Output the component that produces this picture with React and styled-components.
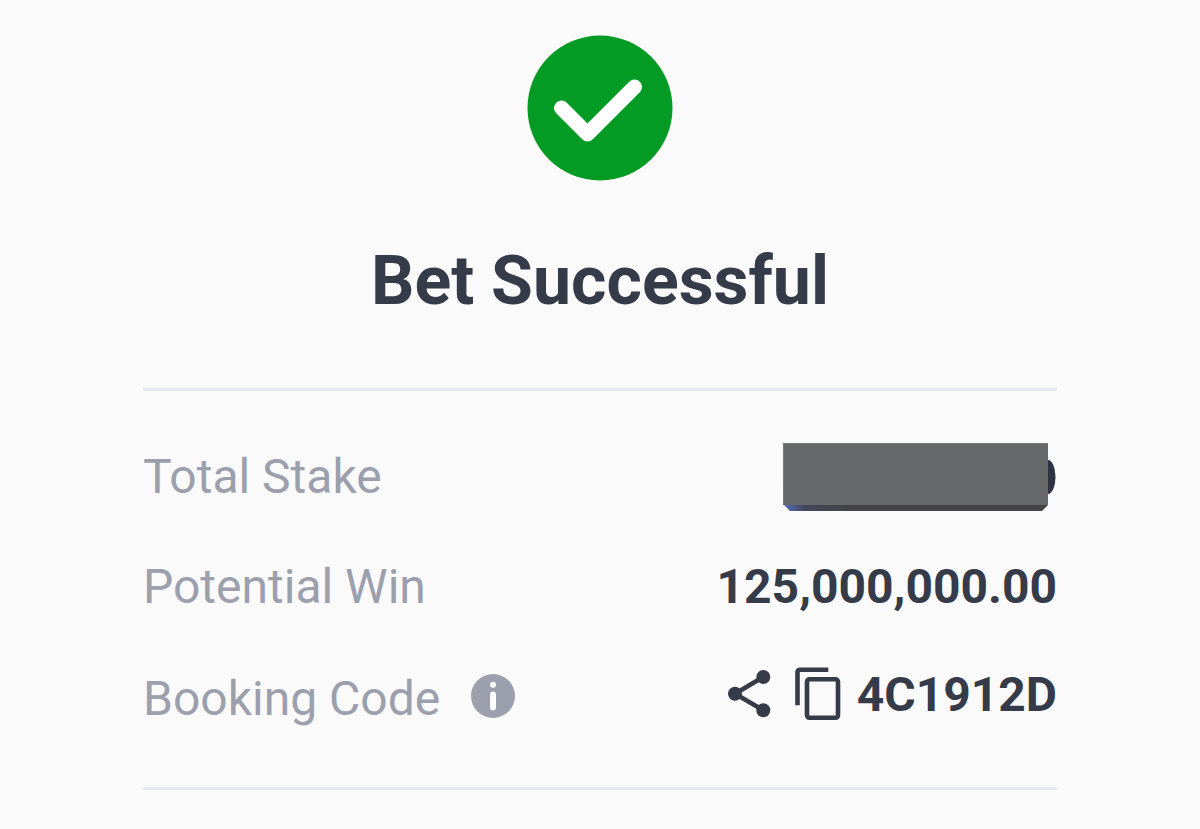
import React from 'react';
import styled, { createGlobalStyle } from 'styled-components';

const COLOR = {
  page: '#fafafb',
  text: '#353b48',
  muted: '#9ca0ad',
  success: '#049b25',
  line: '#e8e9ef',
};

const CheckIcon = () => (
  <svg width="146" height="146" viewBox="0 0 146 146" aria-hidden="true">
    <circle cx="73" cy="73" r="72.5" fill={COLOR.success} />
    <path
      d="M34.500 73 L60.500 99 L107.500 52"
      fill="none"
      stroke="#fff"
      strokeWidth="15"
      strokeLinecap="round"
      strokeLinejoin="round"
    />
  </svg>
);

const InfoIcon = () => (
  <svg width="44" height="44" viewBox="0 0 44 44" aria-hidden="true">
    <circle cx="22" cy="22" r="22" fill={COLOR.muted} />
    <circle cx="22" cy="10.8" r="3" fill="#fff" />
    <path d="M22 20.500 V33.500" stroke="#fff" strokeWidth="6" strokeLinecap="round" />
  </svg>
);

const ShareIcon = () => (
  <svg width="44" height="50" viewBox="0 0 44 50" aria-hidden="true">
    <path d="M36.300 7 L8 23.700 L36.300 40.300" fill="none" stroke={COLOR.text} strokeWidth="4.600" />
    <circle cx="36.300" cy="7" r="7" fill={COLOR.text} />
    <circle cx="8" cy="23.700" r="7" fill={COLOR.text} />
    <circle cx="36.300" cy="40.300" r="7" fill={COLOR.text} />
  </svg>
);

const CopyIcon = () => (
  <svg width="46" height="56" viewBox="0 0 46 56" fill="none" stroke={COLOR.text} aria-hidden="true">
    <path d="M2.500 38.300 V5.500 Q2.500 2.700 5.300 2.700 H33.300" strokeWidth="4.600" />
    <rect x="12" y="12.300" width="31" height="38.500" rx="2.500" strokeWidth="4.600" />
  </svg>
);

const HiddenAmount = () => (
  <svg width="274" height="68" viewBox="0 1 274 68" role="img" aria-label="Amount hidden">
    <defs>
      <linearGradient id="edge" x1="0" x2="1" y1="0" y2="0">
        <stop offset="0" stopColor="#5570c0" />
        <stop offset="0.08" stopColor="#44465a" />
        <stop offset="0.25" stopColor="#444446" />
        <stop offset="1" stopColor="#444446" />
      </linearGradient>
    </defs>
    <ellipse cx="265" cy="35" rx="7.500" ry="17" fill="#2d3342" />
    <path d="M0 1 H265 V63 L259 69 H7 L0 62 Z" fill="url(#edge)" />
    <path d="M0 1 H265 V63 H0 Z" fill="#666768" />
    <path d="M0.500 62 V1.500 H265" fill="none" stroke="#77797f" />
    <path d="M0.500 40 V62" stroke="#6876ae" />
  </svg>
);

const App = () => (
  <>
    <GlobalStyle />
    <Page>
      <CheckIcon />
      <Title>Bet Successful</Title>
      <Details>
        <Row>
          <Label>Total Stake</Label>
          <Value><HiddenAmount /></Value>
        </Row>
        <Row>
          <Label>Potential Win</Label>
          <Value>125,000,000.00</Value>
        </Row>
        <Row $align="flex-end">
          <Label>
            Booking Code
            <IconButton type="button" aria-label="About booking code"><InfoIcon /></IconButton>
          </Label>
          <Value $tall>
            <Actions>
              <IconButton type="button" aria-label="Share"><ShareIcon /></IconButton>
              <IconButton type="button" aria-label="Copy"><CopyIcon /></IconButton>
            </Actions>
            4C1912D
          </Value>
        </Row>
      </Details>
    </Page>
  </>
);

const GlobalStyle = createGlobalStyle`
  body {
    margin: 0;
    background: ${COLOR.page};
    color: ${COLOR.text};
    font-family: Roboto, 'Liberation Sans', sans-serif;
  }

  svg {
    display: block;
    flex: none;
  }
`;

const Page = styled.main`
  display: flex;
  flex-direction: column;
  align-items: center;
  padding: 35px 143px 38px;
`;

const Title = styled.h1`
  margin: 60px 0 67px;
  font-size: 68px;
  font-weight: 700;
  line-height: 80px;
`;

const Details = styled.dl`
  display: flex;
  flex-direction: column;
  gap: 48px;
  align-self: stretch;
  margin: 0;
  padding: 52px 0 60px;
  border: solid ${COLOR.line};
  border-width: 3px 0;
`;

const Row = styled.div`
  display: flex;
  justify-content: space-between;
  align-items: ${props => props.$align || 'center'};
`;

const Label = styled.dt`
  display: flex;
  align-items: flex-start;
  gap: 31px;
  color: ${COLOR.muted};
  font-size: 48px;
  line-height: 56px;
`;

const Value = styled.dd`
  display: flex;
  align-items: center;
  gap: 16px;
  margin: 0;
  font-size: 48px;
  font-weight: 700;
  line-height: ${props => (props.$tall ? '64px' : '56px')};
`;

const Actions = styled.div`
  display: flex;
  align-items: center;
  gap: 24px;
`;

const IconButton = styled.button`
  display: flex;
  align-items: center;
  min-height: 50px;
  padding: 0;
  border: 0;
  background: none;
  cursor: pointer;
`;

export default App;
